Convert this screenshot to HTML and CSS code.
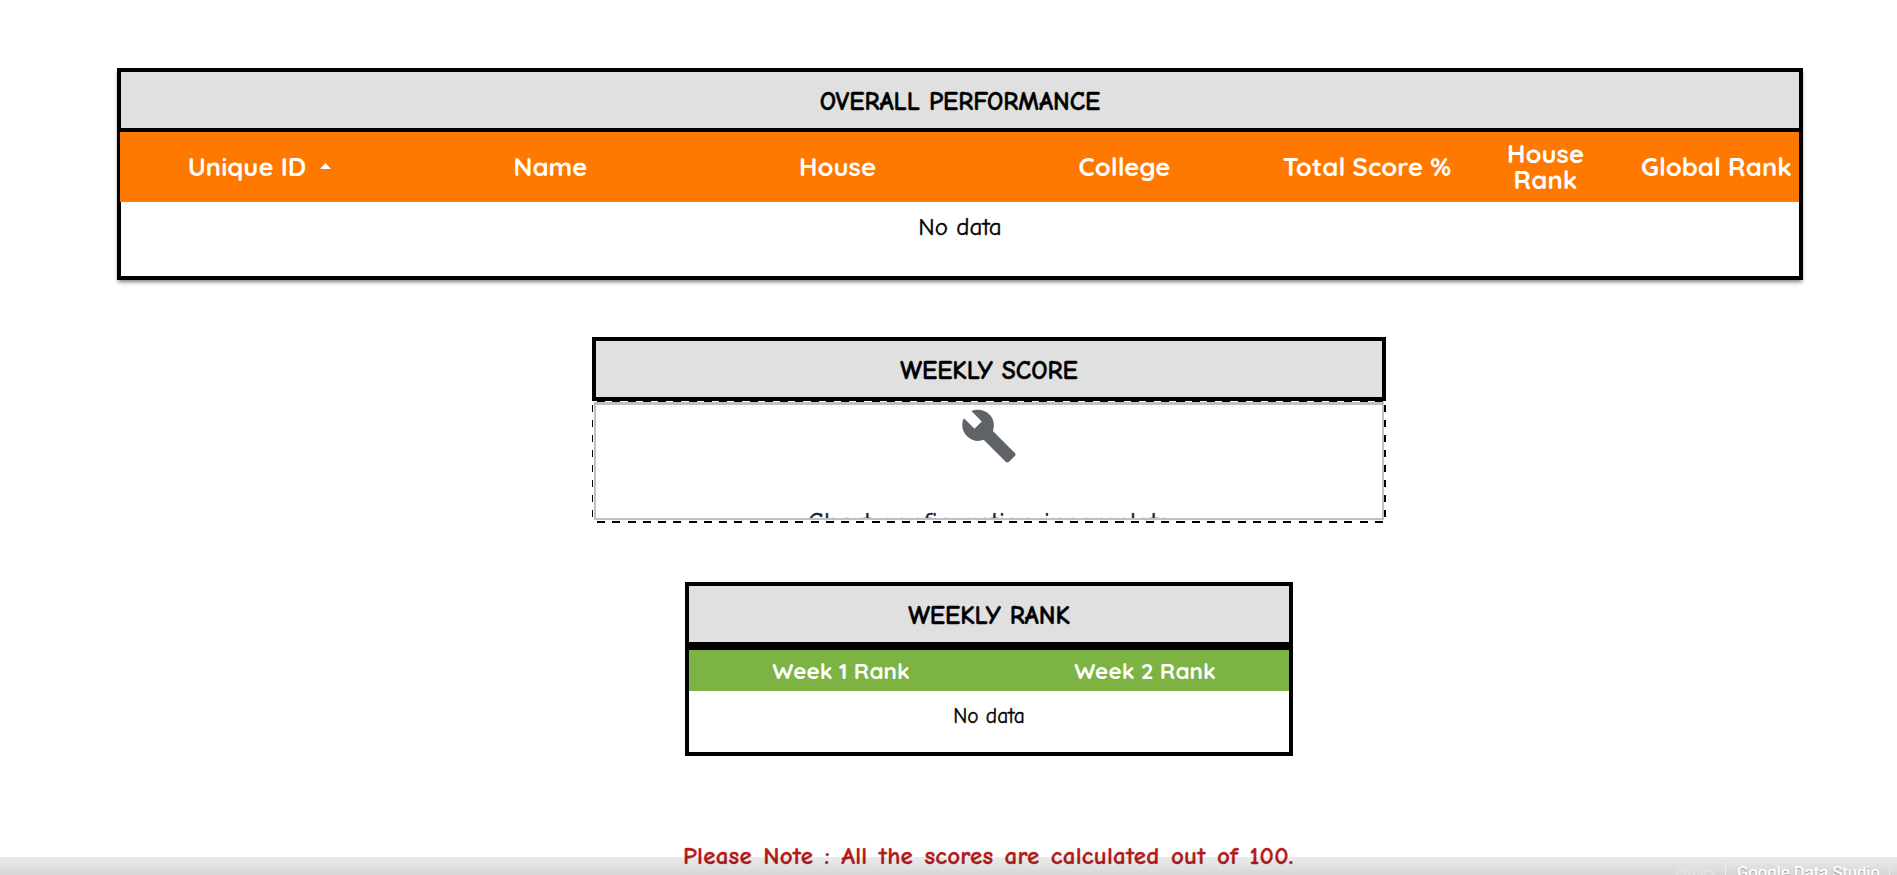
FILE: index.html
```html
<!DOCTYPE html>
<html lang="en">
<head>
<meta charset="utf-8">
<title>Performance Report</title>
<link rel="stylesheet" href="styles.css">
</head>
<body>
<main class="report">
  <section class="panel overall">
    <h2 class="title">OVERALL PERFORMANCE</h2>
    <div class="columns">
      <div class="col sorted"><span>Unique ID</span><svg class="sort" viewBox="0 0 11 6"><path d="M0 6L5.5 0L11 6Z" fill="#fff"/></svg></div>
      <div class="col">Name</div>
      <div class="col">House</div>
      <div class="col">College</div>
      <div class="col">Total Score %</div>
      <div class="col">House<br>Rank</div>
      <div class="col last">Global Rank</div>
    </div>
    <div class="empty">No data</div>
  </section>

  <section class="score">
    <h2 class="title boxed">WEEKLY SCORE</h2>
    <div class="chart">
      <div class="chart-body">
        <svg class="wrench" viewBox="0 0 24 24"><path fill="#5f6368" d="M22.7 19l-9.1-9.1c.9-2.3.4-5-1.5-6.9-2-2-5-2.4-7.4-1.3L9 6 6 9 1.6 4.7C.4 7.1.9 10.1 2.9 12.1c1.9 1.9 4.6 2.4 6.9 1.5l9.1 9.1c.4.4 1 .4 1.4 0l2.3-2.3c.5-.4.5-1.1.1-1.4z"/></svg>
        <div class="message">Chart configuration incomplete</div>
      </div>
    </div>
  </section>

  <section class="panel rank">
    <h2 class="title">WEEKLY RANK</h2>
    <div class="columns green">
      <div class="col">Week 1 Rank</div>
      <div class="col second">Week 2 Rank</div>
    </div>
    <div class="empty small">No data</div>
  </section>

  <p class="note">Please Note : All the scores are calculated out of 100.</p>
</main>
<footer class="footer">
  <span class="privacy">Privacy</span>
  <span class="brand">Google Data Studio</span>
</footer>
</body>
</html>
```

FILE: styles.css
```css
* { box-sizing: border-box; }
html, body { height: 100%; }
body {
  margin: 0;
  position: relative;
  overflow: hidden;
  background: #fff;
  color: #000;
  font-family: "Comic Sans MS", "Comic Neue", Lato, sans-serif;
}
.report { height: 875px; padding-top: 68px; overflow: hidden; }
.title {
  margin: 0;
  height: 60px;
  padding-top: 4px;
  display: flex;
  align-items: center;
  justify-content: center;
  background: #e0e0e0;
  border-bottom: 4px solid #000;
  font-size: 25.6px;
  font-weight: 700;
  line-height: 30px;
  -webkit-text-stroke: .4px #000;
}
.panel { border: 4px solid #000; background: #fff; }
.overall {
  width: 1686px;
  height: 212px;
  margin-left: 117px;
  box-shadow: 0 3px 4px -1px rgba(0, 0, 0, .5);
}
.columns {
  display: grid;
  grid-template-columns: 287px 287px 287px 287px 198px 159px 1fr;
  height: 70px;
  padding-bottom: 2px;
  margin-left: -1px;
  background: #ff7800;
  color: #fff;
  font-family: Quicksand, Lato, sans-serif;
  font-size: 25.7px;
  font-weight: 700;
  line-height: 26px;
  text-align: center;
  white-space: nowrap;
}
.col { display: flex; align-items: center; justify-content: center; }
.sorted { padding-right: 8px; gap: 14px; }
.sort { width: 11px; height: 6px; }
.last { padding-left: 9px; }
.empty {
  padding-top: 10px;
  text-align: center;
  font-size: 25px;
  line-height: 30px;
  -webkit-text-stroke: .4px #000;
}

.score { width: 794px; margin: 57px 0 0 592px; }
.boxed { height: 64px; border: 4px solid #000; }
.chart {
  height: 122px;
  padding: 1px 2px 3px;
  background:
    repeating-linear-gradient(90deg, transparent 0 5px, #000 5px 13px, transparent 13px 15.25px) 0 0 / 100% 1px no-repeat,
    repeating-linear-gradient(90deg, transparent 0 5px, #000 5px 13px, transparent 13px 15.25px) 0 100% / 100% 2px no-repeat,
    repeating-linear-gradient(180deg, transparent 0 4px, #000 4px 11px, transparent 11px 15px) 0 0 / 1px 100% no-repeat,
    repeating-linear-gradient(180deg, transparent 0 4px, #000 4px 11px, transparent 11px 15px) 100% 0 / 2px 100% no-repeat;
}
.chart-body {
  height: 118px;
  overflow: hidden;
  border: 2px solid #c0c0c0;
  border-top-width: 3px;
  text-align: center;
  background: #fff;
}
.wrench { display: block; width: 58px; height: 58px; margin: 2px auto 0; }
.message {
  margin-top: 43px;
  color: #202124;
  font-size: 27px;
  letter-spacing: .2px;
  line-height: 30px;
  -webkit-text-stroke: .5px #202124;
}

.rank { width: 608px; height: 174px; margin: 59px 0 0 685px; }
.green {
  grid-template-columns: 304px 296px;
  height: 45px;
  padding: 0;
  margin: 0;
  border-top: 4px solid #000;
  background: #7cb342;
  font-size: 22.5px;
}
.second { padding-left: 8px; }
.small { font-size: 21.4px; }

.note {
  margin: 85px 0 0 683px;
  color: #b71c1c;
  font-size: 25px;
  font-weight: 700;
  letter-spacing: .22px;
  word-spacing: 2.2px;
  line-height: 30px;
  white-space: nowrap;
  -webkit-text-stroke: .3px #b71c1c;
}

/* Footer strip fades over the bottom of the report */
.footer {
  position: absolute;
  left: 0;
  right: 0;
  bottom: 0;
  height: 18px;
  overflow: hidden;
  display: flex;
  justify-content: flex-end;
  padding: 6px 7px 0 0;
  background: linear-gradient(rgba(0, 0, 0, .08), rgba(0, 0, 0, .16));
  color: #fff;
  font-family: Roboto, sans-serif;
  line-height: 20px;
}
.privacy { padding-right: 9px; color: #e6e6e6; font-size: 12.5px; border-right: 1px solid #eee; }
.brand { padding: 0 9px 0 11px; border-right: 1px solid #e8e8e8; font-size: 16.6px; font-weight: 500; line-height: 19px; text-shadow: 0 1px 1px rgba(0, 0, 0, .3); }
```
